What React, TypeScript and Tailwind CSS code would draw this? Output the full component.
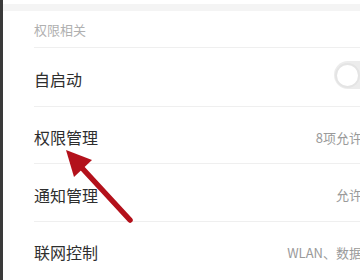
import React from "react";

const font = { fontFamily: '"Noto Sans CJK SC", "Noto Sans", sans-serif' };

function Row({ label, right, h, children }: { label: string; right?: string; h: string; children?: React.ReactNode }) {
  return (
    <div className={`flex items-center justify-between border-b border-[#efefef] ${h}`}>
      <span className="text-[16px] text-[#2e2e2e] leading-none pt-[4px]">{label}</span>
      {right && <span className="text-[13px] text-[#9a9a9a] leading-none pt-[4px] mr-[-2px]">{right}</span>}
      {children}
    </div>
  );
}

export default function App() {
  return (
    <div className="relative w-[360px] h-[280px] overflow-hidden bg-white flex" style={font}>
      <div className="w-[3px] h-full bg-[#3a3a3a] shrink-0" />
      <div className="flex-1 flex flex-col">
        <div className="h-[4px] bg-white" />
        <div className="h-[7px] bg-[#f4f4f4]" />
        <div className="pl-[31px] flex flex-col">
          <div className="h-[37px] flex items-center border-b border-[#efefef]">
            <span className="text-[13px] text-[#b0b0b0] leading-none pt-[1px]">权限相关</span>
          </div>
          <Row label="自启动" h="h-[59px]">
            <div className="w-[44px] h-[28px] rounded-full bg-[#ececec] mr-[-18px] mt-[-4px] flex items-center pl-[1px]">
              <div className="w-[25px] h-[25px] rounded-full bg-white border-[2px] border-[#e4e4e4]" />
            </div>
          </Row>
          <Row label="权限管理" right="8项允许" h="h-[57px]" />
          <Row label="通知管理" right="允许" h="h-[58px]" />
          <div className="flex items-center justify-between h-[58px]">
            <span className="text-[16px] text-[#2e2e2e] leading-none pt-[2px]">联网控制</span>
            <span className="text-[13px] text-[#9a9a9a] leading-none pt-[2px] mr-[-2px]">WLAN、数据</span>
          </div>
        </div>
      </div>
      <svg className="absolute left-0 top-0" width="360" height="280" viewBox="0 0 360 280">
        <line x1="82" y1="168" x2="130" y2="220" stroke="#b3111b" strokeWidth="5.5" strokeLinecap="round" />
        <polygon points="66,150 92,160 74,177" fill="#b3111b" />
      </svg>
    </div>
  );
}
